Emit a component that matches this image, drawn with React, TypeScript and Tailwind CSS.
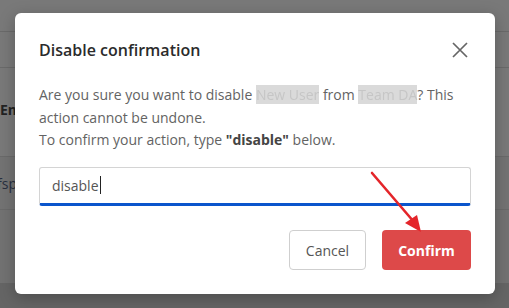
function Redacted({ children }: { children: string }) {
  return <span className="bg-[#dadada] text-[#c6c6c6] [filter:blur(0.5px)]">{children}</span>
}

export default function App() {
  return (
    <div className="relative h-[308px] w-[509px] overflow-hidden font-['Open_Sans',sans-serif]">
      {/* page behind the overlay */}
      <div className="flex h-full flex-col bg-[#797979]">
        <div className="h-[32px] border-b border-[#6a6a6a]" />
        <div className="h-[36px] border-b border-[#6a6a6a]" />
        <div className="flex h-[89px] items-center border-b border-[#6a6a6a] pb-[6px]">
          <span className="text-[14px] font-bold text-[#222]">Em</span>
        </div>
        <div className="flex h-[53px] items-center border-b border-[#6a6a6a] bg-[#737373]">
          <span className="-ml-[3px] text-[14px] text-[#283040]">fsp</span>
        </div>
        <div className="h-[73px] bg-[#727272]" />
        <div className="flex-1 bg-[#656565]" />
      </div>

      {/* modal */}
      <div className="absolute left-[15px] top-[13px] flex h-[281px] w-[480px] flex-col rounded-[6px] bg-white px-[24px] pb-[24px] pt-[23px] shadow-[0_4px_16px_rgba(0,0,0,0.25)]">
        <div className="flex items-center justify-between">
          <h2 className="text-[16px] font-semibold leading-[28px] text-[#2b2b2b]">Disable confirmation</h2>
          <button className="mr-[3px] text-[#666]">
            <svg width="16" height="16" viewBox="0 0 16 16">
              <path d="M1 1 L15 15 M15 1 L1 15" stroke="currentColor" strokeWidth="1.7" />
            </svg>
          </button>
        </div>
        <div className="mt-[20px] text-[14px] leading-[22.5px] text-[#636363]">
          <div>
            Are you sure you want to disable <Redacted>New User</Redacted> from <Redacted>Team DA</Redacted>? This
          </div>
          <div>action cannot be undone.</div>
          <div>
            To confirm your action, type <span className="font-bold text-[#444]">"disable"</span> below.
          </div>
        </div>
        <div className="mt-[15px] flex h-[39px] items-center rounded-[3px] border border-[#d4d4d4] border-b-[3px] border-b-[#0b55cc] px-[12px] text-[14px] text-[#555]">
          disable<span className="ml-px h-[18px] w-px bg-[#222]" />
        </div>
        <div className="mt-auto flex justify-end gap-[16px]">
          <button className="h-[40px] w-[77px] rounded-[4px] border border-[#cfcfcf] bg-white text-[14px] text-[#555]">
            Cancel
          </button>
          <button className="h-[40px] w-[89px] rounded-[4px] bg-[#dd4949] text-[14px] font-bold text-white">
            Confirm
          </button>
        </div>
      </div>

      {/* annotation arrow */}
      <svg className="pointer-events-none absolute left-0 top-0" width="509" height="308" viewBox="0 0 509 308">
        <line x1="372" y1="173" x2="414" y2="222" stroke="#e4252a" strokeWidth="2.6" strokeLinecap="round" />
        <polygon points="421,232 405,223 417,215" fill="#e4252a" />
      </svg>
    </div>
  )
}
